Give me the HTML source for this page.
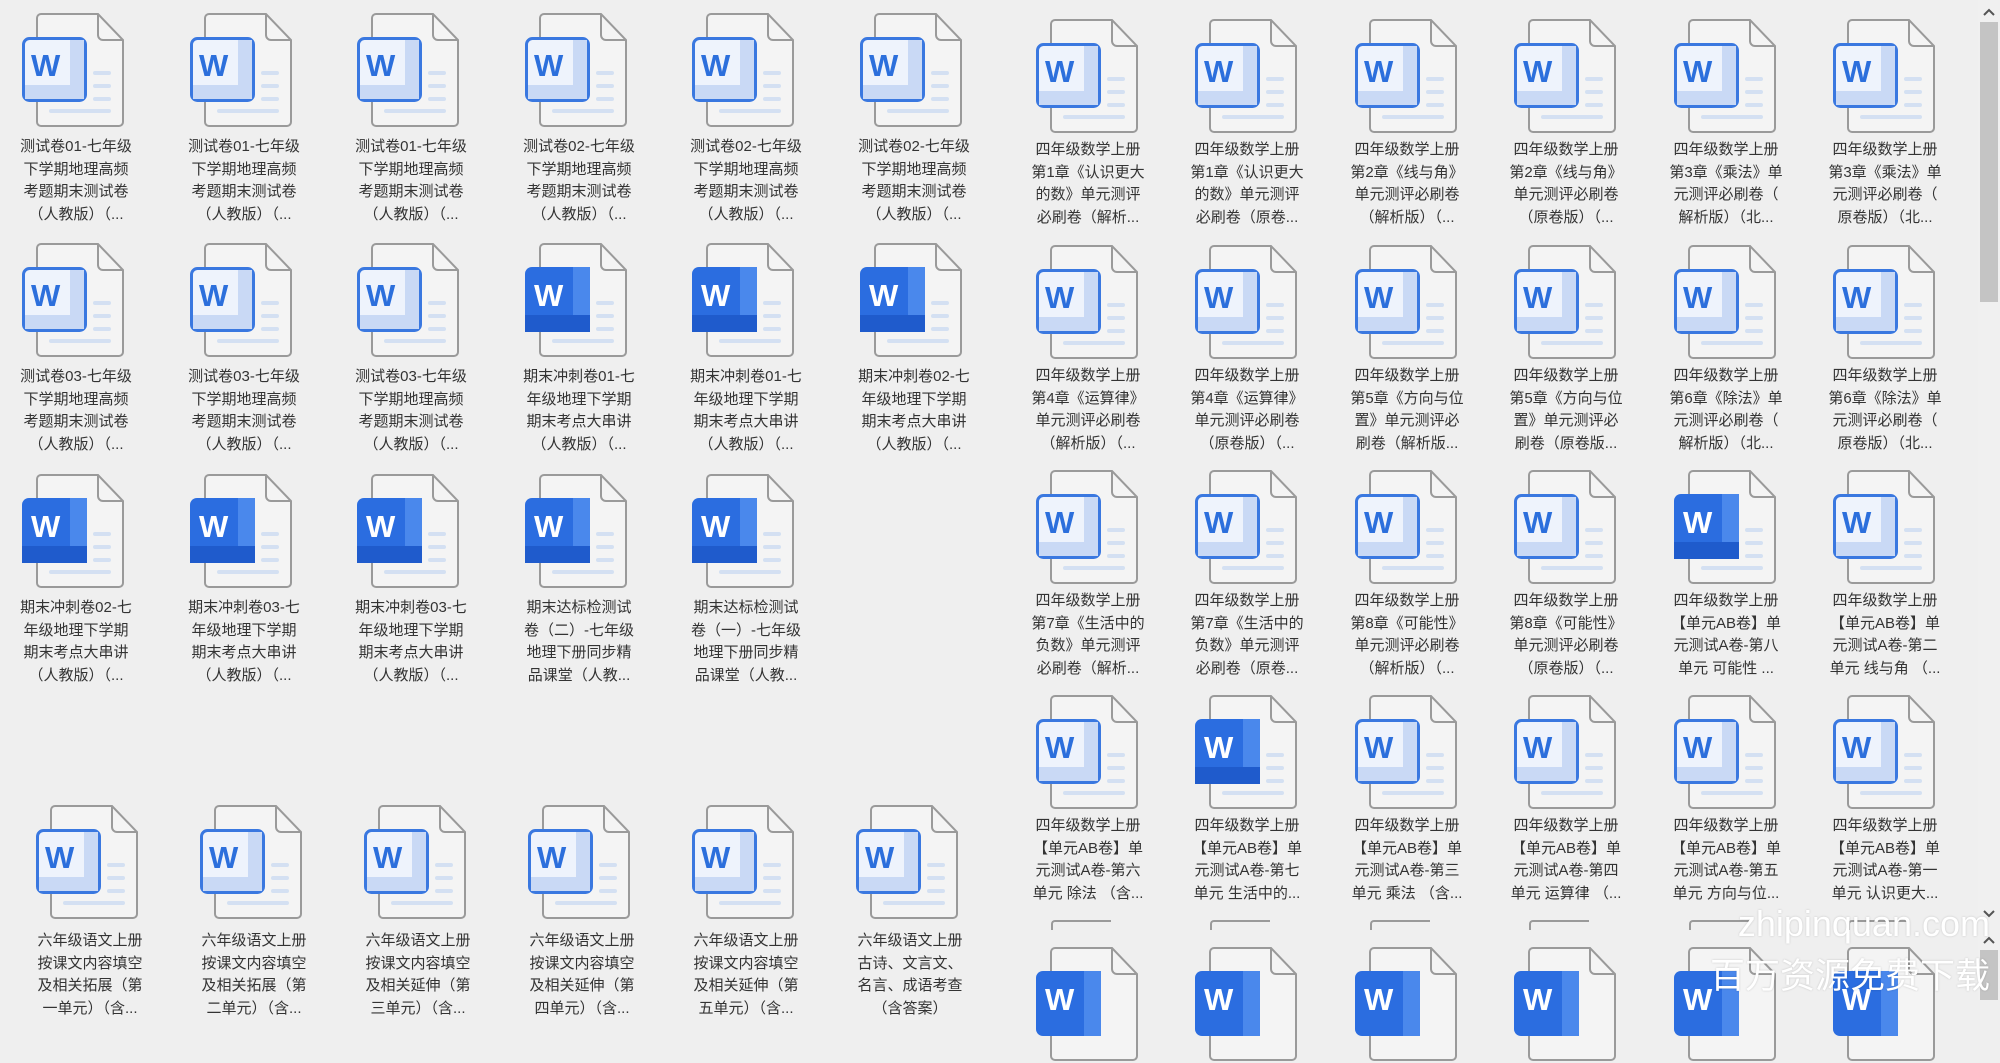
<!DOCTYPE html>
<html><head><meta charset="utf-8">
<style>
html,body{margin:0;padding:0;}
body{width:2000px;height:1000px;background:#efefef;position:relative;overflow:hidden;font-family:"Liberation Sans","Noto Sans CJK SC",sans-serif;}
.it{position:absolute;width:110px;height:116px;}
.it svg{position:absolute;left:0;top:0;}
.it p{position:absolute;left:-22px;width:152px;top:123px;margin:0;text-align:center;font-size:15px;line-height:22.5px;color:#333;white-space:nowrap;}
.r p{top:120px;left:-24px;}
.b p{top:125px;}
.sb{position:absolute;left:1978px;top:0;width:22px;height:1000px;background:#f0f0f0;}
.wm{position:absolute;color:#fff;text-shadow:0 0 2px rgba(0,0,0,.18);white-space:nowrap;text-align:right;}
.cut{position:absolute;height:8px;border-top:2px solid #9a9a9a;border-left:2px solid #9a9a9a;border-top-left-radius:4px;width:58px;}
</style></head><body>

<!-- LEFT TOP -->
<div class="it" style="left:22px;top:13px"><svg width="110" height="116"><path d="M19,1H76L101,27V109a4,4 0 0 1-4,4H19a4,4 0 0 1-4-4V5a4,4 0 0 1 4-4Z" fill="#f4f4f4" stroke="#9a9a9a" stroke-width="2"/><path d="M76,1V22a5,5 0 0 0 5,5H101" fill="none" stroke="#9a9a9a" stroke-width="2"/><g fill="#d4e0f2"><rect x="71" y="58" width="18" height="4" rx="2"/><rect x="71" y="71" width="18" height="4" rx="2"/><rect x="71" y="84" width="18" height="4" rx="2"/><rect x="27" y="96" width="62" height="4" rx="2"/></g><rect x="1.5" y="25.5" width="62" height="62" rx="6" fill="#eef3fc" stroke="#3a78e0" stroke-width="3"/><rect x="48" y="27" width="14" height="59" fill="#c9d9f5"/><rect x="3" y="72" width="59" height="14" fill="#c9d9f5"/><text x="9" y="63" font-family="Liberation Sans" font-weight="bold" font-size="31" fill="#2c6fdc">W</text></svg><p>测试卷01-七年级<br>下学期地理高频<br>考题期末测试卷<br>（人教版）（...</p></div>
<div class="it" style="left:190px;top:13px"><svg width="110" height="116"><path d="M19,1H76L101,27V109a4,4 0 0 1-4,4H19a4,4 0 0 1-4-4V5a4,4 0 0 1 4-4Z" fill="#f4f4f4" stroke="#9a9a9a" stroke-width="2"/><path d="M76,1V22a5,5 0 0 0 5,5H101" fill="none" stroke="#9a9a9a" stroke-width="2"/><g fill="#d4e0f2"><rect x="71" y="58" width="18" height="4" rx="2"/><rect x="71" y="71" width="18" height="4" rx="2"/><rect x="71" y="84" width="18" height="4" rx="2"/><rect x="27" y="96" width="62" height="4" rx="2"/></g><rect x="1.5" y="25.5" width="62" height="62" rx="6" fill="#eef3fc" stroke="#3a78e0" stroke-width="3"/><rect x="48" y="27" width="14" height="59" fill="#c9d9f5"/><rect x="3" y="72" width="59" height="14" fill="#c9d9f5"/><text x="9" y="63" font-family="Liberation Sans" font-weight="bold" font-size="31" fill="#2c6fdc">W</text></svg><p>测试卷01-七年级<br>下学期地理高频<br>考题期末测试卷<br>（人教版）（...</p></div>
<div class="it" style="left:357px;top:13px"><svg width="110" height="116"><path d="M19,1H76L101,27V109a4,4 0 0 1-4,4H19a4,4 0 0 1-4-4V5a4,4 0 0 1 4-4Z" fill="#f4f4f4" stroke="#9a9a9a" stroke-width="2"/><path d="M76,1V22a5,5 0 0 0 5,5H101" fill="none" stroke="#9a9a9a" stroke-width="2"/><g fill="#d4e0f2"><rect x="71" y="58" width="18" height="4" rx="2"/><rect x="71" y="71" width="18" height="4" rx="2"/><rect x="71" y="84" width="18" height="4" rx="2"/><rect x="27" y="96" width="62" height="4" rx="2"/></g><rect x="1.5" y="25.5" width="62" height="62" rx="6" fill="#eef3fc" stroke="#3a78e0" stroke-width="3"/><rect x="48" y="27" width="14" height="59" fill="#c9d9f5"/><rect x="3" y="72" width="59" height="14" fill="#c9d9f5"/><text x="9" y="63" font-family="Liberation Sans" font-weight="bold" font-size="31" fill="#2c6fdc">W</text></svg><p>测试卷01-七年级<br>下学期地理高频<br>考题期末测试卷<br>（人教版）（...</p></div>
<div class="it" style="left:525px;top:13px"><svg width="110" height="116"><path d="M19,1H76L101,27V109a4,4 0 0 1-4,4H19a4,4 0 0 1-4-4V5a4,4 0 0 1 4-4Z" fill="#f4f4f4" stroke="#9a9a9a" stroke-width="2"/><path d="M76,1V22a5,5 0 0 0 5,5H101" fill="none" stroke="#9a9a9a" stroke-width="2"/><g fill="#d4e0f2"><rect x="71" y="58" width="18" height="4" rx="2"/><rect x="71" y="71" width="18" height="4" rx="2"/><rect x="71" y="84" width="18" height="4" rx="2"/><rect x="27" y="96" width="62" height="4" rx="2"/></g><rect x="1.5" y="25.5" width="62" height="62" rx="6" fill="#eef3fc" stroke="#3a78e0" stroke-width="3"/><rect x="48" y="27" width="14" height="59" fill="#c9d9f5"/><rect x="3" y="72" width="59" height="14" fill="#c9d9f5"/><text x="9" y="63" font-family="Liberation Sans" font-weight="bold" font-size="31" fill="#2c6fdc">W</text></svg><p>测试卷02-七年级<br>下学期地理高频<br>考题期末测试卷<br>（人教版）（...</p></div>
<div class="it" style="left:692px;top:13px"><svg width="110" height="116"><path d="M19,1H76L101,27V109a4,4 0 0 1-4,4H19a4,4 0 0 1-4-4V5a4,4 0 0 1 4-4Z" fill="#f4f4f4" stroke="#9a9a9a" stroke-width="2"/><path d="M76,1V22a5,5 0 0 0 5,5H101" fill="none" stroke="#9a9a9a" stroke-width="2"/><g fill="#d4e0f2"><rect x="71" y="58" width="18" height="4" rx="2"/><rect x="71" y="71" width="18" height="4" rx="2"/><rect x="71" y="84" width="18" height="4" rx="2"/><rect x="27" y="96" width="62" height="4" rx="2"/></g><rect x="1.5" y="25.5" width="62" height="62" rx="6" fill="#eef3fc" stroke="#3a78e0" stroke-width="3"/><rect x="48" y="27" width="14" height="59" fill="#c9d9f5"/><rect x="3" y="72" width="59" height="14" fill="#c9d9f5"/><text x="9" y="63" font-family="Liberation Sans" font-weight="bold" font-size="31" fill="#2c6fdc">W</text></svg><p>测试卷02-七年级<br>下学期地理高频<br>考题期末测试卷<br>（人教版）（...</p></div>
<div class="it" style="left:860px;top:13px"><svg width="110" height="116"><path d="M19,1H76L101,27V109a4,4 0 0 1-4,4H19a4,4 0 0 1-4-4V5a4,4 0 0 1 4-4Z" fill="#f4f4f4" stroke="#9a9a9a" stroke-width="2"/><path d="M76,1V22a5,5 0 0 0 5,5H101" fill="none" stroke="#9a9a9a" stroke-width="2"/><g fill="#d4e0f2"><rect x="71" y="58" width="18" height="4" rx="2"/><rect x="71" y="71" width="18" height="4" rx="2"/><rect x="71" y="84" width="18" height="4" rx="2"/><rect x="27" y="96" width="62" height="4" rx="2"/></g><rect x="1.5" y="25.5" width="62" height="62" rx="6" fill="#eef3fc" stroke="#3a78e0" stroke-width="3"/><rect x="48" y="27" width="14" height="59" fill="#c9d9f5"/><rect x="3" y="72" width="59" height="14" fill="#c9d9f5"/><text x="9" y="63" font-family="Liberation Sans" font-weight="bold" font-size="31" fill="#2c6fdc">W</text></svg><p>测试卷02-七年级<br>下学期地理高频<br>考题期末测试卷<br>（人教版）（...</p></div>

<div class="it" style="left:22px;top:243px"><svg width="110" height="116"><path d="M19,1H76L101,27V109a4,4 0 0 1-4,4H19a4,4 0 0 1-4-4V5a4,4 0 0 1 4-4Z" fill="#f4f4f4" stroke="#9a9a9a" stroke-width="2"/><path d="M76,1V22a5,5 0 0 0 5,5H101" fill="none" stroke="#9a9a9a" stroke-width="2"/><g fill="#d4e0f2"><rect x="71" y="58" width="18" height="4" rx="2"/><rect x="71" y="71" width="18" height="4" rx="2"/><rect x="71" y="84" width="18" height="4" rx="2"/><rect x="27" y="96" width="62" height="4" rx="2"/></g><rect x="1.5" y="25.5" width="62" height="62" rx="6" fill="#eef3fc" stroke="#3a78e0" stroke-width="3"/><rect x="48" y="27" width="14" height="59" fill="#c9d9f5"/><rect x="3" y="72" width="59" height="14" fill="#c9d9f5"/><text x="9" y="63" font-family="Liberation Sans" font-weight="bold" font-size="31" fill="#2c6fdc">W</text></svg><p>测试卷03-七年级<br>下学期地理高频<br>考题期末测试卷<br>（人教版）（...</p></div>
<div class="it" style="left:190px;top:243px"><svg width="110" height="116"><path d="M19,1H76L101,27V109a4,4 0 0 1-4,4H19a4,4 0 0 1-4-4V5a4,4 0 0 1 4-4Z" fill="#f4f4f4" stroke="#9a9a9a" stroke-width="2"/><path d="M76,1V22a5,5 0 0 0 5,5H101" fill="none" stroke="#9a9a9a" stroke-width="2"/><g fill="#d4e0f2"><rect x="71" y="58" width="18" height="4" rx="2"/><rect x="71" y="71" width="18" height="4" rx="2"/><rect x="71" y="84" width="18" height="4" rx="2"/><rect x="27" y="96" width="62" height="4" rx="2"/></g><rect x="1.5" y="25.5" width="62" height="62" rx="6" fill="#eef3fc" stroke="#3a78e0" stroke-width="3"/><rect x="48" y="27" width="14" height="59" fill="#c9d9f5"/><rect x="3" y="72" width="59" height="14" fill="#c9d9f5"/><text x="9" y="63" font-family="Liberation Sans" font-weight="bold" font-size="31" fill="#2c6fdc">W</text></svg><p>测试卷03-七年级<br>下学期地理高频<br>考题期末测试卷<br>（人教版）（...</p></div>
<div class="it" style="left:357px;top:243px"><svg width="110" height="116"><path d="M19,1H76L101,27V109a4,4 0 0 1-4,4H19a4,4 0 0 1-4-4V5a4,4 0 0 1 4-4Z" fill="#f4f4f4" stroke="#9a9a9a" stroke-width="2"/><path d="M76,1V22a5,5 0 0 0 5,5H101" fill="none" stroke="#9a9a9a" stroke-width="2"/><g fill="#d4e0f2"><rect x="71" y="58" width="18" height="4" rx="2"/><rect x="71" y="71" width="18" height="4" rx="2"/><rect x="71" y="84" width="18" height="4" rx="2"/><rect x="27" y="96" width="62" height="4" rx="2"/></g><rect x="1.5" y="25.5" width="62" height="62" rx="6" fill="#eef3fc" stroke="#3a78e0" stroke-width="3"/><rect x="48" y="27" width="14" height="59" fill="#c9d9f5"/><rect x="3" y="72" width="59" height="14" fill="#c9d9f5"/><text x="9" y="63" font-family="Liberation Sans" font-weight="bold" font-size="31" fill="#2c6fdc">W</text></svg><p>测试卷03-七年级<br>下学期地理高频<br>考题期末测试卷<br>（人教版）（...</p></div>
<div class="it" style="left:525px;top:243px"><svg width="110" height="116"><path d="M19,1H76L101,27V109a4,4 0 0 1-4,4H19a4,4 0 0 1-4-4V5a4,4 0 0 1 4-4Z" fill="#f4f4f4" stroke="#9a9a9a" stroke-width="2"/><path d="M76,1V22a5,5 0 0 0 5,5H101" fill="none" stroke="#9a9a9a" stroke-width="2"/><g fill="#d4e0f2"><rect x="71" y="58" width="18" height="4" rx="2"/><rect x="71" y="71" width="18" height="4" rx="2"/><rect x="71" y="84" width="18" height="4" rx="2"/><rect x="27" y="96" width="62" height="4" rx="2"/></g><rect x="0" y="24" width="65" height="65" rx="7" fill="#2b6de0"/><rect x="48" y="24" width="17" height="65" fill="#4a88ec"/><rect x="0" y="72" width="65" height="17" fill="#1f5bcc"/><text x="9" y="63" font-family="Liberation Sans" font-weight="bold" font-size="31" fill="#fff">W</text></svg><p>期末冲刺卷01-七<br>年级地理下学期<br>期末考点大串讲<br>（人教版）（...</p></div>
<div class="it" style="left:692px;top:243px"><svg width="110" height="116"><path d="M19,1H76L101,27V109a4,4 0 0 1-4,4H19a4,4 0 0 1-4-4V5a4,4 0 0 1 4-4Z" fill="#f4f4f4" stroke="#9a9a9a" stroke-width="2"/><path d="M76,1V22a5,5 0 0 0 5,5H101" fill="none" stroke="#9a9a9a" stroke-width="2"/><g fill="#d4e0f2"><rect x="71" y="58" width="18" height="4" rx="2"/><rect x="71" y="71" width="18" height="4" rx="2"/><rect x="71" y="84" width="18" height="4" rx="2"/><rect x="27" y="96" width="62" height="4" rx="2"/></g><rect x="0" y="24" width="65" height="65" rx="7" fill="#2b6de0"/><rect x="48" y="24" width="17" height="65" fill="#4a88ec"/><rect x="0" y="72" width="65" height="17" fill="#1f5bcc"/><text x="9" y="63" font-family="Liberation Sans" font-weight="bold" font-size="31" fill="#fff">W</text></svg><p>期末冲刺卷01-七<br>年级地理下学期<br>期末考点大串讲<br>（人教版）（...</p></div>
<div class="it" style="left:860px;top:243px"><svg width="110" height="116"><path d="M19,1H76L101,27V109a4,4 0 0 1-4,4H19a4,4 0 0 1-4-4V5a4,4 0 0 1 4-4Z" fill="#f4f4f4" stroke="#9a9a9a" stroke-width="2"/><path d="M76,1V22a5,5 0 0 0 5,5H101" fill="none" stroke="#9a9a9a" stroke-width="2"/><g fill="#d4e0f2"><rect x="71" y="58" width="18" height="4" rx="2"/><rect x="71" y="71" width="18" height="4" rx="2"/><rect x="71" y="84" width="18" height="4" rx="2"/><rect x="27" y="96" width="62" height="4" rx="2"/></g><rect x="0" y="24" width="65" height="65" rx="7" fill="#2b6de0"/><rect x="48" y="24" width="17" height="65" fill="#4a88ec"/><rect x="0" y="72" width="65" height="17" fill="#1f5bcc"/><text x="9" y="63" font-family="Liberation Sans" font-weight="bold" font-size="31" fill="#fff">W</text></svg><p>期末冲刺卷02-七<br>年级地理下学期<br>期末考点大串讲<br>（人教版）（...</p></div>

<div class="it" style="left:22px;top:474px"><svg width="110" height="116"><path d="M19,1H76L101,27V109a4,4 0 0 1-4,4H19a4,4 0 0 1-4-4V5a4,4 0 0 1 4-4Z" fill="#f4f4f4" stroke="#9a9a9a" stroke-width="2"/><path d="M76,1V22a5,5 0 0 0 5,5H101" fill="none" stroke="#9a9a9a" stroke-width="2"/><g fill="#d4e0f2"><rect x="71" y="58" width="18" height="4" rx="2"/><rect x="71" y="71" width="18" height="4" rx="2"/><rect x="71" y="84" width="18" height="4" rx="2"/><rect x="27" y="96" width="62" height="4" rx="2"/></g><rect x="0" y="24" width="65" height="65" rx="7" fill="#2b6de0"/><rect x="48" y="24" width="17" height="65" fill="#4a88ec"/><rect x="0" y="72" width="65" height="17" fill="#1f5bcc"/><text x="9" y="63" font-family="Liberation Sans" font-weight="bold" font-size="31" fill="#fff">W</text></svg><p>期末冲刺卷02-七<br>年级地理下学期<br>期末考点大串讲<br>（人教版）（...</p></div>
<div class="it" style="left:190px;top:474px"><svg width="110" height="116"><path d="M19,1H76L101,27V109a4,4 0 0 1-4,4H19a4,4 0 0 1-4-4V5a4,4 0 0 1 4-4Z" fill="#f4f4f4" stroke="#9a9a9a" stroke-width="2"/><path d="M76,1V22a5,5 0 0 0 5,5H101" fill="none" stroke="#9a9a9a" stroke-width="2"/><g fill="#d4e0f2"><rect x="71" y="58" width="18" height="4" rx="2"/><rect x="71" y="71" width="18" height="4" rx="2"/><rect x="71" y="84" width="18" height="4" rx="2"/><rect x="27" y="96" width="62" height="4" rx="2"/></g><rect x="0" y="24" width="65" height="65" rx="7" fill="#2b6de0"/><rect x="48" y="24" width="17" height="65" fill="#4a88ec"/><rect x="0" y="72" width="65" height="17" fill="#1f5bcc"/><text x="9" y="63" font-family="Liberation Sans" font-weight="bold" font-size="31" fill="#fff">W</text></svg><p>期末冲刺卷03-七<br>年级地理下学期<br>期末考点大串讲<br>（人教版）（...</p></div>
<div class="it" style="left:357px;top:474px"><svg width="110" height="116"><path d="M19,1H76L101,27V109a4,4 0 0 1-4,4H19a4,4 0 0 1-4-4V5a4,4 0 0 1 4-4Z" fill="#f4f4f4" stroke="#9a9a9a" stroke-width="2"/><path d="M76,1V22a5,5 0 0 0 5,5H101" fill="none" stroke="#9a9a9a" stroke-width="2"/><g fill="#d4e0f2"><rect x="71" y="58" width="18" height="4" rx="2"/><rect x="71" y="71" width="18" height="4" rx="2"/><rect x="71" y="84" width="18" height="4" rx="2"/><rect x="27" y="96" width="62" height="4" rx="2"/></g><rect x="0" y="24" width="65" height="65" rx="7" fill="#2b6de0"/><rect x="48" y="24" width="17" height="65" fill="#4a88ec"/><rect x="0" y="72" width="65" height="17" fill="#1f5bcc"/><text x="9" y="63" font-family="Liberation Sans" font-weight="bold" font-size="31" fill="#fff">W</text></svg><p>期末冲刺卷03-七<br>年级地理下学期<br>期末考点大串讲<br>（人教版）（...</p></div>
<div class="it" style="left:525px;top:474px"><svg width="110" height="116"><path d="M19,1H76L101,27V109a4,4 0 0 1-4,4H19a4,4 0 0 1-4-4V5a4,4 0 0 1 4-4Z" fill="#f4f4f4" stroke="#9a9a9a" stroke-width="2"/><path d="M76,1V22a5,5 0 0 0 5,5H101" fill="none" stroke="#9a9a9a" stroke-width="2"/><g fill="#d4e0f2"><rect x="71" y="58" width="18" height="4" rx="2"/><rect x="71" y="71" width="18" height="4" rx="2"/><rect x="71" y="84" width="18" height="4" rx="2"/><rect x="27" y="96" width="62" height="4" rx="2"/></g><rect x="0" y="24" width="65" height="65" rx="7" fill="#2b6de0"/><rect x="48" y="24" width="17" height="65" fill="#4a88ec"/><rect x="0" y="72" width="65" height="17" fill="#1f5bcc"/><text x="9" y="63" font-family="Liberation Sans" font-weight="bold" font-size="31" fill="#fff">W</text></svg><p>期末达标检测试<br>卷（二）-七年级<br>地理下册同步精<br>品课堂（人教...</p></div>
<div class="it" style="left:692px;top:474px"><svg width="110" height="116"><path d="M19,1H76L101,27V109a4,4 0 0 1-4,4H19a4,4 0 0 1-4-4V5a4,4 0 0 1 4-4Z" fill="#f4f4f4" stroke="#9a9a9a" stroke-width="2"/><path d="M76,1V22a5,5 0 0 0 5,5H101" fill="none" stroke="#9a9a9a" stroke-width="2"/><g fill="#d4e0f2"><rect x="71" y="58" width="18" height="4" rx="2"/><rect x="71" y="71" width="18" height="4" rx="2"/><rect x="71" y="84" width="18" height="4" rx="2"/><rect x="27" y="96" width="62" height="4" rx="2"/></g><rect x="0" y="24" width="65" height="65" rx="7" fill="#2b6de0"/><rect x="48" y="24" width="17" height="65" fill="#4a88ec"/><rect x="0" y="72" width="65" height="17" fill="#1f5bcc"/><text x="9" y="63" font-family="Liberation Sans" font-weight="bold" font-size="31" fill="#fff">W</text></svg><p>期末达标检测试<br>卷（一）-七年级<br>地理下册同步精<br>品课堂（人教...</p></div>

<!-- LEFT BOTTOM -->
<div class="it b" style="left:36px;top:805px"><svg width="110" height="116"><path d="M19,1H76L101,27V109a4,4 0 0 1-4,4H19a4,4 0 0 1-4-4V5a4,4 0 0 1 4-4Z" fill="#f4f4f4" stroke="#9a9a9a" stroke-width="2"/><path d="M76,1V22a5,5 0 0 0 5,5H101" fill="none" stroke="#9a9a9a" stroke-width="2"/><g fill="#d4e0f2"><rect x="71" y="58" width="18" height="4" rx="2"/><rect x="71" y="71" width="18" height="4" rx="2"/><rect x="71" y="84" width="18" height="4" rx="2"/><rect x="27" y="96" width="62" height="4" rx="2"/></g><rect x="1.5" y="25.5" width="62" height="62" rx="6" fill="#eef3fc" stroke="#3a78e0" stroke-width="3"/><rect x="48" y="27" width="14" height="59" fill="#c9d9f5"/><rect x="3" y="72" width="59" height="14" fill="#c9d9f5"/><text x="9" y="63" font-family="Liberation Sans" font-weight="bold" font-size="31" fill="#2c6fdc">W</text></svg><p>六年级语文上册<br>按课文内容填空<br>及相关拓展（第<br>一单元）（含...</p></div>
<div class="it b" style="left:200px;top:805px"><svg width="110" height="116"><path d="M19,1H76L101,27V109a4,4 0 0 1-4,4H19a4,4 0 0 1-4-4V5a4,4 0 0 1 4-4Z" fill="#f4f4f4" stroke="#9a9a9a" stroke-width="2"/><path d="M76,1V22a5,5 0 0 0 5,5H101" fill="none" stroke="#9a9a9a" stroke-width="2"/><g fill="#d4e0f2"><rect x="71" y="58" width="18" height="4" rx="2"/><rect x="71" y="71" width="18" height="4" rx="2"/><rect x="71" y="84" width="18" height="4" rx="2"/><rect x="27" y="96" width="62" height="4" rx="2"/></g><rect x="1.5" y="25.5" width="62" height="62" rx="6" fill="#eef3fc" stroke="#3a78e0" stroke-width="3"/><rect x="48" y="27" width="14" height="59" fill="#c9d9f5"/><rect x="3" y="72" width="59" height="14" fill="#c9d9f5"/><text x="9" y="63" font-family="Liberation Sans" font-weight="bold" font-size="31" fill="#2c6fdc">W</text></svg><p>六年级语文上册<br>按课文内容填空<br>及相关拓展（第<br>二单元）（含...</p></div>
<div class="it b" style="left:364px;top:805px"><svg width="110" height="116"><path d="M19,1H76L101,27V109a4,4 0 0 1-4,4H19a4,4 0 0 1-4-4V5a4,4 0 0 1 4-4Z" fill="#f4f4f4" stroke="#9a9a9a" stroke-width="2"/><path d="M76,1V22a5,5 0 0 0 5,5H101" fill="none" stroke="#9a9a9a" stroke-width="2"/><g fill="#d4e0f2"><rect x="71" y="58" width="18" height="4" rx="2"/><rect x="71" y="71" width="18" height="4" rx="2"/><rect x="71" y="84" width="18" height="4" rx="2"/><rect x="27" y="96" width="62" height="4" rx="2"/></g><rect x="1.5" y="25.5" width="62" height="62" rx="6" fill="#eef3fc" stroke="#3a78e0" stroke-width="3"/><rect x="48" y="27" width="14" height="59" fill="#c9d9f5"/><rect x="3" y="72" width="59" height="14" fill="#c9d9f5"/><text x="9" y="63" font-family="Liberation Sans" font-weight="bold" font-size="31" fill="#2c6fdc">W</text></svg><p>六年级语文上册<br>按课文内容填空<br>及相关延伸（第<br>三单元）（含...</p></div>
<div class="it b" style="left:528px;top:805px"><svg width="110" height="116"><path d="M19,1H76L101,27V109a4,4 0 0 1-4,4H19a4,4 0 0 1-4-4V5a4,4 0 0 1 4-4Z" fill="#f4f4f4" stroke="#9a9a9a" stroke-width="2"/><path d="M76,1V22a5,5 0 0 0 5,5H101" fill="none" stroke="#9a9a9a" stroke-width="2"/><g fill="#d4e0f2"><rect x="71" y="58" width="18" height="4" rx="2"/><rect x="71" y="71" width="18" height="4" rx="2"/><rect x="71" y="84" width="18" height="4" rx="2"/><rect x="27" y="96" width="62" height="4" rx="2"/></g><rect x="1.5" y="25.5" width="62" height="62" rx="6" fill="#eef3fc" stroke="#3a78e0" stroke-width="3"/><rect x="48" y="27" width="14" height="59" fill="#c9d9f5"/><rect x="3" y="72" width="59" height="14" fill="#c9d9f5"/><text x="9" y="63" font-family="Liberation Sans" font-weight="bold" font-size="31" fill="#2c6fdc">W</text></svg><p>六年级语文上册<br>按课文内容填空<br>及相关延伸（第<br>四单元）（含...</p></div>
<div class="it b" style="left:692px;top:805px"><svg width="110" height="116"><path d="M19,1H76L101,27V109a4,4 0 0 1-4,4H19a4,4 0 0 1-4-4V5a4,4 0 0 1 4-4Z" fill="#f4f4f4" stroke="#9a9a9a" stroke-width="2"/><path d="M76,1V22a5,5 0 0 0 5,5H101" fill="none" stroke="#9a9a9a" stroke-width="2"/><g fill="#d4e0f2"><rect x="71" y="58" width="18" height="4" rx="2"/><rect x="71" y="71" width="18" height="4" rx="2"/><rect x="71" y="84" width="18" height="4" rx="2"/><rect x="27" y="96" width="62" height="4" rx="2"/></g><rect x="1.5" y="25.5" width="62" height="62" rx="6" fill="#eef3fc" stroke="#3a78e0" stroke-width="3"/><rect x="48" y="27" width="14" height="59" fill="#c9d9f5"/><rect x="3" y="72" width="59" height="14" fill="#c9d9f5"/><text x="9" y="63" font-family="Liberation Sans" font-weight="bold" font-size="31" fill="#2c6fdc">W</text></svg><p>六年级语文上册<br>按课文内容填空<br>及相关延伸（第<br>五单元）（含...</p></div>
<div class="it b" style="left:856px;top:805px"><svg width="110" height="116"><path d="M19,1H76L101,27V109a4,4 0 0 1-4,4H19a4,4 0 0 1-4-4V5a4,4 0 0 1 4-4Z" fill="#f4f4f4" stroke="#9a9a9a" stroke-width="2"/><path d="M76,1V22a5,5 0 0 0 5,5H101" fill="none" stroke="#9a9a9a" stroke-width="2"/><g fill="#d4e0f2"><rect x="71" y="58" width="18" height="4" rx="2"/><rect x="71" y="71" width="18" height="4" rx="2"/><rect x="71" y="84" width="18" height="4" rx="2"/><rect x="27" y="96" width="62" height="4" rx="2"/></g><rect x="1.5" y="25.5" width="62" height="62" rx="6" fill="#eef3fc" stroke="#3a78e0" stroke-width="3"/><rect x="48" y="27" width="14" height="59" fill="#c9d9f5"/><rect x="3" y="72" width="59" height="14" fill="#c9d9f5"/><text x="9" y="63" font-family="Liberation Sans" font-weight="bold" font-size="31" fill="#2c6fdc">W</text></svg><p>六年级语文上册<br>古诗、文言文、<br>名言、成语考查<br>（含答案）</p></div>

<!-- RIGHT -->
<div class="it r" style="left:1036px;top:19px"><svg width="110" height="116"><path d="M19,1H76L101,27V109a4,4 0 0 1-4,4H19a4,4 0 0 1-4-4V5a4,4 0 0 1 4-4Z" fill="#f4f4f4" stroke="#9a9a9a" stroke-width="2"/><path d="M76,1V22a5,5 0 0 0 5,5H101" fill="none" stroke="#9a9a9a" stroke-width="2"/><g fill="#d4e0f2"><rect x="71" y="58" width="18" height="4" rx="2"/><rect x="71" y="71" width="18" height="4" rx="2"/><rect x="71" y="84" width="18" height="4" rx="2"/><rect x="27" y="96" width="62" height="4" rx="2"/></g><rect x="1.5" y="25.5" width="62" height="62" rx="6" fill="#eef3fc" stroke="#3a78e0" stroke-width="3"/><rect x="48" y="27" width="14" height="59" fill="#c9d9f5"/><rect x="3" y="72" width="59" height="14" fill="#c9d9f5"/><text x="9" y="63" font-family="Liberation Sans" font-weight="bold" font-size="31" fill="#2c6fdc">W</text></svg><p>四年级数学上册<br>第1章《认识更大<br>的数》单元测评<br>必刷卷（解析...</p></div>
<div class="it r" style="left:1195px;top:19px"><svg width="110" height="116"><path d="M19,1H76L101,27V109a4,4 0 0 1-4,4H19a4,4 0 0 1-4-4V5a4,4 0 0 1 4-4Z" fill="#f4f4f4" stroke="#9a9a9a" stroke-width="2"/><path d="M76,1V22a5,5 0 0 0 5,5H101" fill="none" stroke="#9a9a9a" stroke-width="2"/><g fill="#d4e0f2"><rect x="71" y="58" width="18" height="4" rx="2"/><rect x="71" y="71" width="18" height="4" rx="2"/><rect x="71" y="84" width="18" height="4" rx="2"/><rect x="27" y="96" width="62" height="4" rx="2"/></g><rect x="1.5" y="25.5" width="62" height="62" rx="6" fill="#eef3fc" stroke="#3a78e0" stroke-width="3"/><rect x="48" y="27" width="14" height="59" fill="#c9d9f5"/><rect x="3" y="72" width="59" height="14" fill="#c9d9f5"/><text x="9" y="63" font-family="Liberation Sans" font-weight="bold" font-size="31" fill="#2c6fdc">W</text></svg><p>四年级数学上册<br>第1章《认识更大<br>的数》单元测评<br>必刷卷（原卷...</p></div>
<div class="it r" style="left:1355px;top:19px"><svg width="110" height="116"><path d="M19,1H76L101,27V109a4,4 0 0 1-4,4H19a4,4 0 0 1-4-4V5a4,4 0 0 1 4-4Z" fill="#f4f4f4" stroke="#9a9a9a" stroke-width="2"/><path d="M76,1V22a5,5 0 0 0 5,5H101" fill="none" stroke="#9a9a9a" stroke-width="2"/><g fill="#d4e0f2"><rect x="71" y="58" width="18" height="4" rx="2"/><rect x="71" y="71" width="18" height="4" rx="2"/><rect x="71" y="84" width="18" height="4" rx="2"/><rect x="27" y="96" width="62" height="4" rx="2"/></g><rect x="1.5" y="25.5" width="62" height="62" rx="6" fill="#eef3fc" stroke="#3a78e0" stroke-width="3"/><rect x="48" y="27" width="14" height="59" fill="#c9d9f5"/><rect x="3" y="72" width="59" height="14" fill="#c9d9f5"/><text x="9" y="63" font-family="Liberation Sans" font-weight="bold" font-size="31" fill="#2c6fdc">W</text></svg><p>四年级数学上册<br>第2章《线与角》<br>单元测评必刷卷<br>（解析版）（...</p></div>
<div class="it r" style="left:1514px;top:19px"><svg width="110" height="116"><path d="M19,1H76L101,27V109a4,4 0 0 1-4,4H19a4,4 0 0 1-4-4V5a4,4 0 0 1 4-4Z" fill="#f4f4f4" stroke="#9a9a9a" stroke-width="2"/><path d="M76,1V22a5,5 0 0 0 5,5H101" fill="none" stroke="#9a9a9a" stroke-width="2"/><g fill="#d4e0f2"><rect x="71" y="58" width="18" height="4" rx="2"/><rect x="71" y="71" width="18" height="4" rx="2"/><rect x="71" y="84" width="18" height="4" rx="2"/><rect x="27" y="96" width="62" height="4" rx="2"/></g><rect x="1.5" y="25.5" width="62" height="62" rx="6" fill="#eef3fc" stroke="#3a78e0" stroke-width="3"/><rect x="48" y="27" width="14" height="59" fill="#c9d9f5"/><rect x="3" y="72" width="59" height="14" fill="#c9d9f5"/><text x="9" y="63" font-family="Liberation Sans" font-weight="bold" font-size="31" fill="#2c6fdc">W</text></svg><p>四年级数学上册<br>第2章《线与角》<br>单元测评必刷卷<br>（原卷版）（...</p></div>
<div class="it r" style="left:1674px;top:19px"><svg width="110" height="116"><path d="M19,1H76L101,27V109a4,4 0 0 1-4,4H19a4,4 0 0 1-4-4V5a4,4 0 0 1 4-4Z" fill="#f4f4f4" stroke="#9a9a9a" stroke-width="2"/><path d="M76,1V22a5,5 0 0 0 5,5H101" fill="none" stroke="#9a9a9a" stroke-width="2"/><g fill="#d4e0f2"><rect x="71" y="58" width="18" height="4" rx="2"/><rect x="71" y="71" width="18" height="4" rx="2"/><rect x="71" y="84" width="18" height="4" rx="2"/><rect x="27" y="96" width="62" height="4" rx="2"/></g><rect x="1.5" y="25.5" width="62" height="62" rx="6" fill="#eef3fc" stroke="#3a78e0" stroke-width="3"/><rect x="48" y="27" width="14" height="59" fill="#c9d9f5"/><rect x="3" y="72" width="59" height="14" fill="#c9d9f5"/><text x="9" y="63" font-family="Liberation Sans" font-weight="bold" font-size="31" fill="#2c6fdc">W</text></svg><p>四年级数学上册<br>第3章《乘法》单<br>元测评必刷卷（<br>解析版）（北...</p></div>
<div class="it r" style="left:1833px;top:19px"><svg width="110" height="116"><path d="M19,1H76L101,27V109a4,4 0 0 1-4,4H19a4,4 0 0 1-4-4V5a4,4 0 0 1 4-4Z" fill="#f4f4f4" stroke="#9a9a9a" stroke-width="2"/><path d="M76,1V22a5,5 0 0 0 5,5H101" fill="none" stroke="#9a9a9a" stroke-width="2"/><g fill="#d4e0f2"><rect x="71" y="58" width="18" height="4" rx="2"/><rect x="71" y="71" width="18" height="4" rx="2"/><rect x="71" y="84" width="18" height="4" rx="2"/><rect x="27" y="96" width="62" height="4" rx="2"/></g><rect x="1.5" y="25.5" width="62" height="62" rx="6" fill="#eef3fc" stroke="#3a78e0" stroke-width="3"/><rect x="48" y="27" width="14" height="59" fill="#c9d9f5"/><rect x="3" y="72" width="59" height="14" fill="#c9d9f5"/><text x="9" y="63" font-family="Liberation Sans" font-weight="bold" font-size="31" fill="#2c6fdc">W</text></svg><p>四年级数学上册<br>第3章《乘法》单<br>元测评必刷卷（<br>原卷版）（北...</p></div>

<div class="it r" style="left:1036px;top:245px"><svg width="110" height="116"><path d="M19,1H76L101,27V109a4,4 0 0 1-4,4H19a4,4 0 0 1-4-4V5a4,4 0 0 1 4-4Z" fill="#f4f4f4" stroke="#9a9a9a" stroke-width="2"/><path d="M76,1V22a5,5 0 0 0 5,5H101" fill="none" stroke="#9a9a9a" stroke-width="2"/><g fill="#d4e0f2"><rect x="71" y="58" width="18" height="4" rx="2"/><rect x="71" y="71" width="18" height="4" rx="2"/><rect x="71" y="84" width="18" height="4" rx="2"/><rect x="27" y="96" width="62" height="4" rx="2"/></g><rect x="1.5" y="25.5" width="62" height="62" rx="6" fill="#eef3fc" stroke="#3a78e0" stroke-width="3"/><rect x="48" y="27" width="14" height="59" fill="#c9d9f5"/><rect x="3" y="72" width="59" height="14" fill="#c9d9f5"/><text x="9" y="63" font-family="Liberation Sans" font-weight="bold" font-size="31" fill="#2c6fdc">W</text></svg><p>四年级数学上册<br>第4章《运算律》<br>单元测评必刷卷<br>（解析版）（...</p></div>
<div class="it r" style="left:1195px;top:245px"><svg width="110" height="116"><path d="M19,1H76L101,27V109a4,4 0 0 1-4,4H19a4,4 0 0 1-4-4V5a4,4 0 0 1 4-4Z" fill="#f4f4f4" stroke="#9a9a9a" stroke-width="2"/><path d="M76,1V22a5,5 0 0 0 5,5H101" fill="none" stroke="#9a9a9a" stroke-width="2"/><g fill="#d4e0f2"><rect x="71" y="58" width="18" height="4" rx="2"/><rect x="71" y="71" width="18" height="4" rx="2"/><rect x="71" y="84" width="18" height="4" rx="2"/><rect x="27" y="96" width="62" height="4" rx="2"/></g><rect x="1.5" y="25.5" width="62" height="62" rx="6" fill="#eef3fc" stroke="#3a78e0" stroke-width="3"/><rect x="48" y="27" width="14" height="59" fill="#c9d9f5"/><rect x="3" y="72" width="59" height="14" fill="#c9d9f5"/><text x="9" y="63" font-family="Liberation Sans" font-weight="bold" font-size="31" fill="#2c6fdc">W</text></svg><p>四年级数学上册<br>第4章《运算律》<br>单元测评必刷卷<br>（原卷版）（...</p></div>
<div class="it r" style="left:1355px;top:245px"><svg width="110" height="116"><path d="M19,1H76L101,27V109a4,4 0 0 1-4,4H19a4,4 0 0 1-4-4V5a4,4 0 0 1 4-4Z" fill="#f4f4f4" stroke="#9a9a9a" stroke-width="2"/><path d="M76,1V22a5,5 0 0 0 5,5H101" fill="none" stroke="#9a9a9a" stroke-width="2"/><g fill="#d4e0f2"><rect x="71" y="58" width="18" height="4" rx="2"/><rect x="71" y="71" width="18" height="4" rx="2"/><rect x="71" y="84" width="18" height="4" rx="2"/><rect x="27" y="96" width="62" height="4" rx="2"/></g><rect x="1.5" y="25.5" width="62" height="62" rx="6" fill="#eef3fc" stroke="#3a78e0" stroke-width="3"/><rect x="48" y="27" width="14" height="59" fill="#c9d9f5"/><rect x="3" y="72" width="59" height="14" fill="#c9d9f5"/><text x="9" y="63" font-family="Liberation Sans" font-weight="bold" font-size="31" fill="#2c6fdc">W</text></svg><p>四年级数学上册<br>第5章《方向与位<br>置》单元测评必<br>刷卷（解析版...</p></div>
<div class="it r" style="left:1514px;top:245px"><svg width="110" height="116"><path d="M19,1H76L101,27V109a4,4 0 0 1-4,4H19a4,4 0 0 1-4-4V5a4,4 0 0 1 4-4Z" fill="#f4f4f4" stroke="#9a9a9a" stroke-width="2"/><path d="M76,1V22a5,5 0 0 0 5,5H101" fill="none" stroke="#9a9a9a" stroke-width="2"/><g fill="#d4e0f2"><rect x="71" y="58" width="18" height="4" rx="2"/><rect x="71" y="71" width="18" height="4" rx="2"/><rect x="71" y="84" width="18" height="4" rx="2"/><rect x="27" y="96" width="62" height="4" rx="2"/></g><rect x="1.5" y="25.5" width="62" height="62" rx="6" fill="#eef3fc" stroke="#3a78e0" stroke-width="3"/><rect x="48" y="27" width="14" height="59" fill="#c9d9f5"/><rect x="3" y="72" width="59" height="14" fill="#c9d9f5"/><text x="9" y="63" font-family="Liberation Sans" font-weight="bold" font-size="31" fill="#2c6fdc">W</text></svg><p>四年级数学上册<br>第5章《方向与位<br>置》单元测评必<br>刷卷（原卷版...</p></div>
<div class="it r" style="left:1674px;top:245px"><svg width="110" height="116"><path d="M19,1H76L101,27V109a4,4 0 0 1-4,4H19a4,4 0 0 1-4-4V5a4,4 0 0 1 4-4Z" fill="#f4f4f4" stroke="#9a9a9a" stroke-width="2"/><path d="M76,1V22a5,5 0 0 0 5,5H101" fill="none" stroke="#9a9a9a" stroke-width="2"/><g fill="#d4e0f2"><rect x="71" y="58" width="18" height="4" rx="2"/><rect x="71" y="71" width="18" height="4" rx="2"/><rect x="71" y="84" width="18" height="4" rx="2"/><rect x="27" y="96" width="62" height="4" rx="2"/></g><rect x="1.5" y="25.5" width="62" height="62" rx="6" fill="#eef3fc" stroke="#3a78e0" stroke-width="3"/><rect x="48" y="27" width="14" height="59" fill="#c9d9f5"/><rect x="3" y="72" width="59" height="14" fill="#c9d9f5"/><text x="9" y="63" font-family="Liberation Sans" font-weight="bold" font-size="31" fill="#2c6fdc">W</text></svg><p>四年级数学上册<br>第6章《除法》单<br>元测评必刷卷（<br>解析版）（北...</p></div>
<div class="it r" style="left:1833px;top:245px"><svg width="110" height="116"><path d="M19,1H76L101,27V109a4,4 0 0 1-4,4H19a4,4 0 0 1-4-4V5a4,4 0 0 1 4-4Z" fill="#f4f4f4" stroke="#9a9a9a" stroke-width="2"/><path d="M76,1V22a5,5 0 0 0 5,5H101" fill="none" stroke="#9a9a9a" stroke-width="2"/><g fill="#d4e0f2"><rect x="71" y="58" width="18" height="4" rx="2"/><rect x="71" y="71" width="18" height="4" rx="2"/><rect x="71" y="84" width="18" height="4" rx="2"/><rect x="27" y="96" width="62" height="4" rx="2"/></g><rect x="1.5" y="25.5" width="62" height="62" rx="6" fill="#eef3fc" stroke="#3a78e0" stroke-width="3"/><rect x="48" y="27" width="14" height="59" fill="#c9d9f5"/><rect x="3" y="72" width="59" height="14" fill="#c9d9f5"/><text x="9" y="63" font-family="Liberation Sans" font-weight="bold" font-size="31" fill="#2c6fdc">W</text></svg><p>四年级数学上册<br>第6章《除法》单<br>元测评必刷卷（<br>原卷版）（北...</p></div>

<div class="it r" style="left:1036px;top:470px"><svg width="110" height="116"><path d="M19,1H76L101,27V109a4,4 0 0 1-4,4H19a4,4 0 0 1-4-4V5a4,4 0 0 1 4-4Z" fill="#f4f4f4" stroke="#9a9a9a" stroke-width="2"/><path d="M76,1V22a5,5 0 0 0 5,5H101" fill="none" stroke="#9a9a9a" stroke-width="2"/><g fill="#d4e0f2"><rect x="71" y="58" width="18" height="4" rx="2"/><rect x="71" y="71" width="18" height="4" rx="2"/><rect x="71" y="84" width="18" height="4" rx="2"/><rect x="27" y="96" width="62" height="4" rx="2"/></g><rect x="1.5" y="25.5" width="62" height="62" rx="6" fill="#eef3fc" stroke="#3a78e0" stroke-width="3"/><rect x="48" y="27" width="14" height="59" fill="#c9d9f5"/><rect x="3" y="72" width="59" height="14" fill="#c9d9f5"/><text x="9" y="63" font-family="Liberation Sans" font-weight="bold" font-size="31" fill="#2c6fdc">W</text></svg><p>四年级数学上册<br>第7章《生活中的<br>负数》单元测评<br>必刷卷（解析...</p></div>
<div class="it r" style="left:1195px;top:470px"><svg width="110" height="116"><path d="M19,1H76L101,27V109a4,4 0 0 1-4,4H19a4,4 0 0 1-4-4V5a4,4 0 0 1 4-4Z" fill="#f4f4f4" stroke="#9a9a9a" stroke-width="2"/><path d="M76,1V22a5,5 0 0 0 5,5H101" fill="none" stroke="#9a9a9a" stroke-width="2"/><g fill="#d4e0f2"><rect x="71" y="58" width="18" height="4" rx="2"/><rect x="71" y="71" width="18" height="4" rx="2"/><rect x="71" y="84" width="18" height="4" rx="2"/><rect x="27" y="96" width="62" height="4" rx="2"/></g><rect x="1.5" y="25.5" width="62" height="62" rx="6" fill="#eef3fc" stroke="#3a78e0" stroke-width="3"/><rect x="48" y="27" width="14" height="59" fill="#c9d9f5"/><rect x="3" y="72" width="59" height="14" fill="#c9d9f5"/><text x="9" y="63" font-family="Liberation Sans" font-weight="bold" font-size="31" fill="#2c6fdc">W</text></svg><p>四年级数学上册<br>第7章《生活中的<br>负数》单元测评<br>必刷卷（原卷...</p></div>
<div class="it r" style="left:1355px;top:470px"><svg width="110" height="116"><path d="M19,1H76L101,27V109a4,4 0 0 1-4,4H19a4,4 0 0 1-4-4V5a4,4 0 0 1 4-4Z" fill="#f4f4f4" stroke="#9a9a9a" stroke-width="2"/><path d="M76,1V22a5,5 0 0 0 5,5H101" fill="none" stroke="#9a9a9a" stroke-width="2"/><g fill="#d4e0f2"><rect x="71" y="58" width="18" height="4" rx="2"/><rect x="71" y="71" width="18" height="4" rx="2"/><rect x="71" y="84" width="18" height="4" rx="2"/><rect x="27" y="96" width="62" height="4" rx="2"/></g><rect x="1.5" y="25.5" width="62" height="62" rx="6" fill="#eef3fc" stroke="#3a78e0" stroke-width="3"/><rect x="48" y="27" width="14" height="59" fill="#c9d9f5"/><rect x="3" y="72" width="59" height="14" fill="#c9d9f5"/><text x="9" y="63" font-family="Liberation Sans" font-weight="bold" font-size="31" fill="#2c6fdc">W</text></svg><p>四年级数学上册<br>第8章《可能性》<br>单元测评必刷卷<br>（解析版）（...</p></div>
<div class="it r" style="left:1514px;top:470px"><svg width="110" height="116"><path d="M19,1H76L101,27V109a4,4 0 0 1-4,4H19a4,4 0 0 1-4-4V5a4,4 0 0 1 4-4Z" fill="#f4f4f4" stroke="#9a9a9a" stroke-width="2"/><path d="M76,1V22a5,5 0 0 0 5,5H101" fill="none" stroke="#9a9a9a" stroke-width="2"/><g fill="#d4e0f2"><rect x="71" y="58" width="18" height="4" rx="2"/><rect x="71" y="71" width="18" height="4" rx="2"/><rect x="71" y="84" width="18" height="4" rx="2"/><rect x="27" y="96" width="62" height="4" rx="2"/></g><rect x="1.5" y="25.5" width="62" height="62" rx="6" fill="#eef3fc" stroke="#3a78e0" stroke-width="3"/><rect x="48" y="27" width="14" height="59" fill="#c9d9f5"/><rect x="3" y="72" width="59" height="14" fill="#c9d9f5"/><text x="9" y="63" font-family="Liberation Sans" font-weight="bold" font-size="31" fill="#2c6fdc">W</text></svg><p>四年级数学上册<br>第8章《可能性》<br>单元测评必刷卷<br>（原卷版）（...</p></div>
<div class="it r" style="left:1674px;top:470px"><svg width="110" height="116"><path d="M19,1H76L101,27V109a4,4 0 0 1-4,4H19a4,4 0 0 1-4-4V5a4,4 0 0 1 4-4Z" fill="#f4f4f4" stroke="#9a9a9a" stroke-width="2"/><path d="M76,1V22a5,5 0 0 0 5,5H101" fill="none" stroke="#9a9a9a" stroke-width="2"/><g fill="#d4e0f2"><rect x="71" y="58" width="18" height="4" rx="2"/><rect x="71" y="71" width="18" height="4" rx="2"/><rect x="71" y="84" width="18" height="4" rx="2"/><rect x="27" y="96" width="62" height="4" rx="2"/></g><rect x="0" y="24" width="65" height="65" rx="7" fill="#2b6de0"/><rect x="48" y="24" width="17" height="65" fill="#4a88ec"/><rect x="0" y="72" width="65" height="17" fill="#1f5bcc"/><text x="9" y="63" font-family="Liberation Sans" font-weight="bold" font-size="31" fill="#fff">W</text></svg><p>四年级数学上册<br>【单元AB卷】单<br>元测试A卷-第八<br>单元 可能性 ...</p></div>
<div class="it r" style="left:1833px;top:470px"><svg width="110" height="116"><path d="M19,1H76L101,27V109a4,4 0 0 1-4,4H19a4,4 0 0 1-4-4V5a4,4 0 0 1 4-4Z" fill="#f4f4f4" stroke="#9a9a9a" stroke-width="2"/><path d="M76,1V22a5,5 0 0 0 5,5H101" fill="none" stroke="#9a9a9a" stroke-width="2"/><g fill="#d4e0f2"><rect x="71" y="58" width="18" height="4" rx="2"/><rect x="71" y="71" width="18" height="4" rx="2"/><rect x="71" y="84" width="18" height="4" rx="2"/><rect x="27" y="96" width="62" height="4" rx="2"/></g><rect x="1.5" y="25.5" width="62" height="62" rx="6" fill="#eef3fc" stroke="#3a78e0" stroke-width="3"/><rect x="48" y="27" width="14" height="59" fill="#c9d9f5"/><rect x="3" y="72" width="59" height="14" fill="#c9d9f5"/><text x="9" y="63" font-family="Liberation Sans" font-weight="bold" font-size="31" fill="#2c6fdc">W</text></svg><p>四年级数学上册<br>【单元AB卷】单<br>元测试A卷-第二<br>单元 线与角 （...</p></div>

<div class="it r" style="left:1036px;top:695px"><svg width="110" height="116"><path d="M19,1H76L101,27V109a4,4 0 0 1-4,4H19a4,4 0 0 1-4-4V5a4,4 0 0 1 4-4Z" fill="#f4f4f4" stroke="#9a9a9a" stroke-width="2"/><path d="M76,1V22a5,5 0 0 0 5,5H101" fill="none" stroke="#9a9a9a" stroke-width="2"/><g fill="#d4e0f2"><rect x="71" y="58" width="18" height="4" rx="2"/><rect x="71" y="71" width="18" height="4" rx="2"/><rect x="71" y="84" width="18" height="4" rx="2"/><rect x="27" y="96" width="62" height="4" rx="2"/></g><rect x="1.5" y="25.5" width="62" height="62" rx="6" fill="#eef3fc" stroke="#3a78e0" stroke-width="3"/><rect x="48" y="27" width="14" height="59" fill="#c9d9f5"/><rect x="3" y="72" width="59" height="14" fill="#c9d9f5"/><text x="9" y="63" font-family="Liberation Sans" font-weight="bold" font-size="31" fill="#2c6fdc">W</text></svg><p>四年级数学上册<br>【单元AB卷】单<br>元测试A卷-第六<br>单元 除法 （含...</p></div>
<div class="it r" style="left:1195px;top:695px"><svg width="110" height="116"><path d="M19,1H76L101,27V109a4,4 0 0 1-4,4H19a4,4 0 0 1-4-4V5a4,4 0 0 1 4-4Z" fill="#f4f4f4" stroke="#9a9a9a" stroke-width="2"/><path d="M76,1V22a5,5 0 0 0 5,5H101" fill="none" stroke="#9a9a9a" stroke-width="2"/><g fill="#d4e0f2"><rect x="71" y="58" width="18" height="4" rx="2"/><rect x="71" y="71" width="18" height="4" rx="2"/><rect x="71" y="84" width="18" height="4" rx="2"/><rect x="27" y="96" width="62" height="4" rx="2"/></g><rect x="0" y="24" width="65" height="65" rx="7" fill="#2b6de0"/><rect x="48" y="24" width="17" height="65" fill="#4a88ec"/><rect x="0" y="72" width="65" height="17" fill="#1f5bcc"/><text x="9" y="63" font-family="Liberation Sans" font-weight="bold" font-size="31" fill="#fff">W</text></svg><p>四年级数学上册<br>【单元AB卷】单<br>元测试A卷-第七<br>单元 生活中的...</p></div>
<div class="it r" style="left:1355px;top:695px"><svg width="110" height="116"><path d="M19,1H76L101,27V109a4,4 0 0 1-4,4H19a4,4 0 0 1-4-4V5a4,4 0 0 1 4-4Z" fill="#f4f4f4" stroke="#9a9a9a" stroke-width="2"/><path d="M76,1V22a5,5 0 0 0 5,5H101" fill="none" stroke="#9a9a9a" stroke-width="2"/><g fill="#d4e0f2"><rect x="71" y="58" width="18" height="4" rx="2"/><rect x="71" y="71" width="18" height="4" rx="2"/><rect x="71" y="84" width="18" height="4" rx="2"/><rect x="27" y="96" width="62" height="4" rx="2"/></g><rect x="1.5" y="25.5" width="62" height="62" rx="6" fill="#eef3fc" stroke="#3a78e0" stroke-width="3"/><rect x="48" y="27" width="14" height="59" fill="#c9d9f5"/><rect x="3" y="72" width="59" height="14" fill="#c9d9f5"/><text x="9" y="63" font-family="Liberation Sans" font-weight="bold" font-size="31" fill="#2c6fdc">W</text></svg><p>四年级数学上册<br>【单元AB卷】单<br>元测试A卷-第三<br>单元 乘法 （含...</p></div>
<div class="it r" style="left:1514px;top:695px"><svg width="110" height="116"><path d="M19,1H76L101,27V109a4,4 0 0 1-4,4H19a4,4 0 0 1-4-4V5a4,4 0 0 1 4-4Z" fill="#f4f4f4" stroke="#9a9a9a" stroke-width="2"/><path d="M76,1V22a5,5 0 0 0 5,5H101" fill="none" stroke="#9a9a9a" stroke-width="2"/><g fill="#d4e0f2"><rect x="71" y="58" width="18" height="4" rx="2"/><rect x="71" y="71" width="18" height="4" rx="2"/><rect x="71" y="84" width="18" height="4" rx="2"/><rect x="27" y="96" width="62" height="4" rx="2"/></g><rect x="1.5" y="25.5" width="62" height="62" rx="6" fill="#eef3fc" stroke="#3a78e0" stroke-width="3"/><rect x="48" y="27" width="14" height="59" fill="#c9d9f5"/><rect x="3" y="72" width="59" height="14" fill="#c9d9f5"/><text x="9" y="63" font-family="Liberation Sans" font-weight="bold" font-size="31" fill="#2c6fdc">W</text></svg><p>四年级数学上册<br>【单元AB卷】单<br>元测试A卷-第四<br>单元 运算律 （...</p></div>
<div class="it r" style="left:1674px;top:695px"><svg width="110" height="116"><path d="M19,1H76L101,27V109a4,4 0 0 1-4,4H19a4,4 0 0 1-4-4V5a4,4 0 0 1 4-4Z" fill="#f4f4f4" stroke="#9a9a9a" stroke-width="2"/><path d="M76,1V22a5,5 0 0 0 5,5H101" fill="none" stroke="#9a9a9a" stroke-width="2"/><g fill="#d4e0f2"><rect x="71" y="58" width="18" height="4" rx="2"/><rect x="71" y="71" width="18" height="4" rx="2"/><rect x="71" y="84" width="18" height="4" rx="2"/><rect x="27" y="96" width="62" height="4" rx="2"/></g><rect x="1.5" y="25.5" width="62" height="62" rx="6" fill="#eef3fc" stroke="#3a78e0" stroke-width="3"/><rect x="48" y="27" width="14" height="59" fill="#c9d9f5"/><rect x="3" y="72" width="59" height="14" fill="#c9d9f5"/><text x="9" y="63" font-family="Liberation Sans" font-weight="bold" font-size="31" fill="#2c6fdc">W</text></svg><p>四年级数学上册<br>【单元AB卷】单<br>元测试A卷-第五<br>单元 方向与位...</p></div>
<div class="it r" style="left:1833px;top:695px"><svg width="110" height="116"><path d="M19,1H76L101,27V109a4,4 0 0 1-4,4H19a4,4 0 0 1-4-4V5a4,4 0 0 1 4-4Z" fill="#f4f4f4" stroke="#9a9a9a" stroke-width="2"/><path d="M76,1V22a5,5 0 0 0 5,5H101" fill="none" stroke="#9a9a9a" stroke-width="2"/><g fill="#d4e0f2"><rect x="71" y="58" width="18" height="4" rx="2"/><rect x="71" y="71" width="18" height="4" rx="2"/><rect x="71" y="84" width="18" height="4" rx="2"/><rect x="27" y="96" width="62" height="4" rx="2"/></g><rect x="1.5" y="25.5" width="62" height="62" rx="6" fill="#eef3fc" stroke="#3a78e0" stroke-width="3"/><rect x="48" y="27" width="14" height="59" fill="#c9d9f5"/><rect x="3" y="72" width="59" height="14" fill="#c9d9f5"/><text x="9" y="63" font-family="Liberation Sans" font-weight="bold" font-size="31" fill="#2c6fdc">W</text></svg><p>四年级数学上册<br>【单元AB卷】单<br>元测试A卷-第一<br>单元 认识更大...</p></div>

<!-- cut tops -->
<div class="cut" style="left:1051px;top:920px"></div>
<div class="cut" style="left:1210px;top:920px"></div>
<div class="cut" style="left:1370px;top:920px"></div>
<div class="cut" style="left:1529px;top:920px"></div>
<div class="cut" style="left:1689px;top:920px"></div>
<div class="cut" style="left:1848px;top:920px"></div>

<!-- row 5 solid -->
<div class="it r" style="left:1036px;top:947px"><svg width="110" height="116"><path d="M19,1H76L101,27V109a4,4 0 0 1-4,4H19a4,4 0 0 1-4-4V5a4,4 0 0 1 4-4Z" fill="#f4f4f4" stroke="#9a9a9a" stroke-width="2"/><path d="M76,1V22a5,5 0 0 0 5,5H101" fill="none" stroke="#9a9a9a" stroke-width="2"/><rect x="0" y="24" width="65" height="65" rx="7" fill="#2b6de0"/><rect x="48" y="24" width="17" height="65" fill="#4a88ec"/><text x="9" y="63" font-family="Liberation Sans" font-weight="bold" font-size="31" fill="#fff">W</text></svg></div>
<div class="it r" style="left:1195px;top:947px"><svg width="110" height="116"><path d="M19,1H76L101,27V109a4,4 0 0 1-4,4H19a4,4 0 0 1-4-4V5a4,4 0 0 1 4-4Z" fill="#f4f4f4" stroke="#9a9a9a" stroke-width="2"/><path d="M76,1V22a5,5 0 0 0 5,5H101" fill="none" stroke="#9a9a9a" stroke-width="2"/><rect x="0" y="24" width="65" height="65" rx="7" fill="#2b6de0"/><rect x="48" y="24" width="17" height="65" fill="#4a88ec"/><text x="9" y="63" font-family="Liberation Sans" font-weight="bold" font-size="31" fill="#fff">W</text></svg></div>
<div class="it r" style="left:1355px;top:947px"><svg width="110" height="116"><path d="M19,1H76L101,27V109a4,4 0 0 1-4,4H19a4,4 0 0 1-4-4V5a4,4 0 0 1 4-4Z" fill="#f4f4f4" stroke="#9a9a9a" stroke-width="2"/><path d="M76,1V22a5,5 0 0 0 5,5H101" fill="none" stroke="#9a9a9a" stroke-width="2"/><rect x="0" y="24" width="65" height="65" rx="7" fill="#2b6de0"/><rect x="48" y="24" width="17" height="65" fill="#4a88ec"/><text x="9" y="63" font-family="Liberation Sans" font-weight="bold" font-size="31" fill="#fff">W</text></svg></div>
<div class="it r" style="left:1514px;top:947px"><svg width="110" height="116"><path d="M19,1H76L101,27V109a4,4 0 0 1-4,4H19a4,4 0 0 1-4-4V5a4,4 0 0 1 4-4Z" fill="#f4f4f4" stroke="#9a9a9a" stroke-width="2"/><path d="M76,1V22a5,5 0 0 0 5,5H101" fill="none" stroke="#9a9a9a" stroke-width="2"/><rect x="0" y="24" width="65" height="65" rx="7" fill="#2b6de0"/><rect x="48" y="24" width="17" height="65" fill="#4a88ec"/><text x="9" y="63" font-family="Liberation Sans" font-weight="bold" font-size="31" fill="#fff">W</text></svg></div>
<div class="it r" style="left:1674px;top:947px"><svg width="110" height="116"><path d="M19,1H76L101,27V109a4,4 0 0 1-4,4H19a4,4 0 0 1-4-4V5a4,4 0 0 1 4-4Z" fill="#f4f4f4" stroke="#9a9a9a" stroke-width="2"/><path d="M76,1V22a5,5 0 0 0 5,5H101" fill="none" stroke="#9a9a9a" stroke-width="2"/><rect x="0" y="24" width="65" height="65" rx="7" fill="#2b6de0"/><rect x="48" y="24" width="17" height="65" fill="#4a88ec"/><text x="9" y="63" font-family="Liberation Sans" font-weight="bold" font-size="31" fill="#fff">W</text></svg></div>
<div class="it r" style="left:1833px;top:947px"><svg width="110" height="116"><path d="M19,1H76L101,27V109a4,4 0 0 1-4,4H19a4,4 0 0 1-4-4V5a4,4 0 0 1 4-4Z" fill="#f4f4f4" stroke="#9a9a9a" stroke-width="2"/><path d="M76,1V22a5,5 0 0 0 5,5H101" fill="none" stroke="#9a9a9a" stroke-width="2"/><rect x="0" y="24" width="65" height="65" rx="7" fill="#2b6de0"/><rect x="48" y="24" width="17" height="65" fill="#4a88ec"/><text x="9" y="63" font-family="Liberation Sans" font-weight="bold" font-size="31" fill="#fff">W</text></svg></div>

<!-- scrollbar -->
<div class="sb">
  <svg width="22" height="1000" style="position:absolute;left:0;top:0">
    <path d="M6,15 L11,10 L16,15" fill="none" stroke="#555" stroke-width="2"/>
    <rect x="2" y="22" width="18" height="280" fill="#c4c4c4"/>
    <path d="M6,911 L11,916 L16,911" fill="none" stroke="#555" stroke-width="2"/>
    <path d="M6,943 L11,938 L16,943" fill="none" stroke="#555" stroke-width="2"/>
    <rect x="2" y="950" width="18" height="50" fill="#c4c4c4"/>
  </svg>
</div>

<!-- watermark -->
<div class="wm" style="right:10px;top:903px;font-size:36px;">zhipinquan.com</div>
<div class="wm" style="right:10px;top:952px;font-size:35px;font-family:'Noto Sans CJK SC',sans-serif;line-height:44px;">百万资源免费下载</div>

</body></html>
